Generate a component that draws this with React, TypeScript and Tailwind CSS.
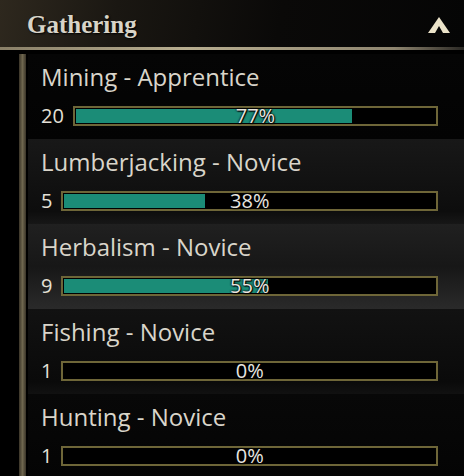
import React from "react";

type Skill = {
  name: string;
  rank: string;
  level: number;
  pct: number;
  bg: string;
};

const skills: Skill[] = [
  { name: "Mining", rank: "Apprentice", level: 20, pct: 77, bg: "bg-[linear-gradient(180deg,#050505,#030303)]" },
  { name: "Lumberjacking", rank: "Novice", level: 5, pct: 38, bg: "bg-[linear-gradient(180deg,#181818,#0d0d0d_85%,#171717)]" },
  { name: "Herbalism", rank: "Novice", level: 9, pct: 55, bg: "bg-[linear-gradient(180deg,#202020,#171717_50%,#2a2a2a)]" },
  { name: "Fishing", rank: "Novice", level: 1, pct: 0, bg: "bg-[linear-gradient(180deg,#121212,#0a0a0a_85%,#111111)]" },
  { name: "Hunting", rank: "Novice", level: 1, pct: 0, bg: "bg-[linear-gradient(180deg,#080808,#040404)]" },
];

function ChevronUp() {
  return (
    <svg width="24" height="18" viewBox="0 0 24 18">
      <path d="M12 1 L23 17 L16 17 L12 10 L8 17 L1 17 Z" fill="#ebe3c9" />
    </svg>
  );
}

function SkillRow({ skill }: { skill: Skill }) {
  return (
    <div className={`h-[85px] pl-[13px] pr-[26px] pt-[7px] ${skill.bg}`}>
      <div className="text-[24px] leading-[32px] text-[#d9d5ca] [font-family:'Open_Sans',sans-serif]">
        {skill.name} - {skill.rank}
      </div>
      <div className="mt-[13px] flex items-center gap-[9px]">
        <span className="text-[20px] leading-none text-[#e4e0d6] [font-family:'Open_Sans',sans-serif]">
          {skill.level}
        </span>
        <div className="relative h-[20px] flex-1 border-2 border-[#6e6638] bg-black p-[1px]">
          <div className="h-full bg-[#1b8c77]" style={{ width: `${skill.pct}%` }} />
          <div className="absolute inset-0 flex items-center justify-center text-[20px] leading-none text-[#e8e6e0] [font-family:'Open_Sans',sans-serif] [text-shadow:0_0_2px_#000,0_0_2px_#000,1px_1px_1px_#000]">
            {skill.pct}%
          </div>
        </div>
      </div>
    </div>
  );
}

export default function App() {
  return (
    <div className="h-[476px] w-[464px] overflow-hidden bg-black">
      <div className="relative flex h-[50px] items-center justify-between bg-[linear-gradient(100deg,#2e281e_0%,#1a1712_25%,#0a0908_60%,#050505_100%)] pl-[27px] pr-[13px]">
        <span className="text-[25px] font-bold text-[#d8d4c8] [font-family:'Liberation_Serif',serif] [text-shadow:1px_1px_2px_#000]">
          Gathering
        </span>
        <ChevronUp />
        <div className="absolute bottom-0 left-0 right-0 h-[3px] bg-[linear-gradient(90deg,#8a8068,#b8ae90_40%,#8f8670_85%,#2a2824)]" />
      </div>
      <div className="flex pt-[4px]">
        <div className="ml-[19px] w-[7px] shrink-0 bg-[linear-gradient(90deg,#3a3428,#6e664e_50%,#3a3428)]" />
        <div className="ml-[2px] flex flex-1 flex-col">
          {skills.map((s) => (
            <SkillRow key={s.name} skill={s} />
          ))}
        </div>
      </div>
    </div>
  );
}
